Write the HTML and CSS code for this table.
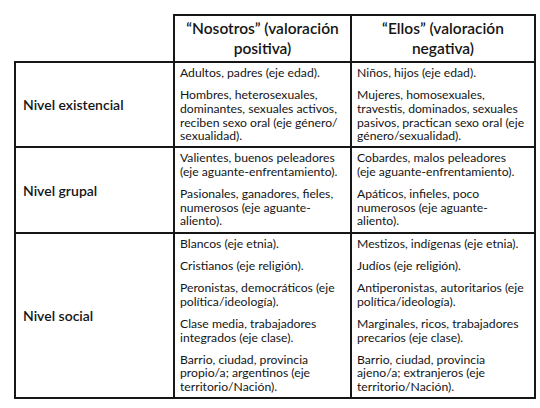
FILE: index.html
```html
<!DOCTYPE html>
<html lang="es">
<head>
<meta charset="utf-8">
<title>Valoraciones</title>
<link rel="stylesheet" href="styles.css">
</head>
<body>
<table class="grid">
  <colgroup>
    <col class="c1">
    <col class="c2">
    <col class="c3">
  </colgroup>
  <thead>
    <tr class="head-row">
      <th class="blank"></th>
      <th class="head">“Nosotros” (valoración<br>positiva)</th>
      <th class="head">“Ellos” (valoración<br>negativa)</th>
    </tr>
  </thead>
  <tbody>
    <tr class="r1">
      <th class="level">Nivel existencial</th>
      <td class="cell">
        <p>Adultos, padres (eje edad).</p>
        <p>Hombres, heterosexuales,<br>dominantes, sexuales activos,<br>reciben sexo oral (eje género/<br>sexualidad).</p>
      </td>
      <td class="cell">
        <p>Niños, hijos (eje edad).</p>
        <p>Mujeres, homosexuales,<br>travestis, dominados, sexuales<br>pasivos, practican sexo oral (eje<br>género/sexualidad).</p>
      </td>
    </tr>
    <tr class="r2">
      <th class="level">Nivel grupal</th>
      <td class="cell">
        <p>Valientes, buenos peleadores<br>(eje aguante-enfrentamiento).</p>
        <p>Pasionales, ganadores, fieles,<br>numerosos (eje aguante-<br>aliento).</p>
      </td>
      <td class="cell">
        <p>Cobardes, malos peleadores<br>(eje aguante-enfrentamiento).</p>
        <p>Apáticos, infieles, poco<br>numerosos (eje aguante-<br>aliento).</p>
      </td>
    </tr>
    <tr class="r3">
      <th class="level">Nivel social</th>
      <td class="cell">
        <p>Blancos (eje etnia).</p>
        <p>Cristianos (eje religión).</p>
        <p>Peronistas, democráticos (eje<br>política/ideología).</p>
        <p>Clase media, trabajadores<br>integrados (eje clase).</p>
        <p>Barrio, ciudad, provincia<br>propio/a; argentinos (eje<br>territorio/Nación).</p>
      </td>
      <td class="cell">
        <p>Mestizos, indígenas (eje etnia).</p>
        <p>Judíos (eje religión).</p>
        <p>Antiperonistas, autoritarios (eje<br>política/ideología).</p>
        <p>Marginales, ricos, trabajadores<br>precarios (eje clase).</p>
        <p>Barrio, ciudad, provincia<br>ajeno/a; extranjeros (eje<br>territorio/Nación).</p>
      </td>
    </tr>
  </tbody>
</table>
</body>
</html>
```
FILE: styles.css
```css
html, body {
  margin: 0;
  padding: 0;
  background: #ffffff;
}

body {
  padding: 14px 0 0 14px;
  font-family: Lato, "Open Sans", "DejaVu Sans", sans-serif;
  color: #151515;
}

.grid {
  border-collapse: collapse;
  table-layout: fixed;
  width: 520px;
}

.c1 { width: 159px; }
.c2 { width: 177px; }
.c3 { width: 184px; }

.grid th,
.grid td {
  border: 2px solid #161616;
  box-sizing: border-box;
}

.grid th.blank {
  border: none;
}

.head-row { height: 47px; }
.r1 { height: 85px; }
.r2 { height: 86px; }
.r3 { height: 165px; }

.head {
  font-size: 15.5px;
  font-weight: 600;
  line-height: 20px;
  text-align: center;
  vertical-align: middle;
  padding: 1px 4px 2px;
}

.level {
  font-size: 14px;
  font-weight: 600;
  text-align: left;
  vertical-align: middle;
  padding: 0 6px 0 7px;
}

.cell {
  vertical-align: top;
  padding: 3px 4px 2px 5px;
  font-size: 12.2px;
  line-height: 13.7px;
}

.cell p {
  margin: 0 0 8.4px;
  white-space: nowrap;
}

.cell p:last-child {
  margin-bottom: 0;
}
```
